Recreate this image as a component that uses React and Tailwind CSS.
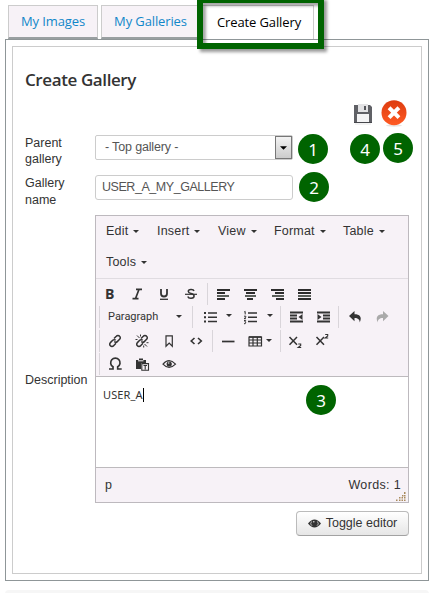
import React from "react";

const arial = "font-['Liberation_Sans',Arial,sans-serif]";

function Caret({ className = "" }) {
  return (
    <svg className={"shrink-0 " + className} width="6" height="3" viewBox="0 0 6 3">
      <path d="M0 0h6L3 3z" fill="#333" />
    </svg>
  );
}

function Icon({ children, className = "w-[27.2px]" }) {
  return (
    <span className={"flex shrink-0 items-center justify-center " + className}>
      <svg width="16" height="16" viewBox="0 0 16 16" fill="none" stroke="#333" strokeWidth="1.5">
        {children}
      </svg>
    </span>
  );
}

function Sep() {
  return <span className="h-[22px] w-px shrink-0 bg-[#d9d5da]" />;
}

function Lines({ rows }) {
  return rows.map(([x, w], i) => (
    <rect key={i} x={x} y={3 + i * 3} width={w} height="2" fill={i === 2 ? "#5a5f5a" : "#2d2d2d"} stroke="none" />
  ));
}

function Badge({ n, className }) {
  return (
    <span
      className={
        "absolute flex h-[30px] w-[30px] items-center justify-center rounded-full bg-[#006400] font-['Noto_Sans',sans-serif] text-[17px] leading-none text-white " +
        className
      }
    >
      {n}
    </span>
  );
}

function MenuItem({ label, className }) {
  return (
    <span className={"flex items-center gap-[5px] " + className}>
      {label}
      <Caret />
    </span>
  );
}

function ChainHalves() {
  return (
    <g strokeWidth="1.5">
      <path d="M7 5.5 9.3 3.2a2.1 2.1 0 0 1 3.3 0 2.1 2.1 0 0 1 0 3.1l-2.3 2.3a2.1 2.1 0 0 1-3 0" />
      <path d="M9 10.3l-2.400 2.400a2.100 2.100 0 0 1-3.200 0 2.100 2.100 0 0 1 0-3.100L5.700 7.300a2.100 2.100 0 0 1 3 0" />
    </g>
  );
}

function Toolbar() {
  return (
    <div className="h-[97px] pt-[3px]">
      <div className="flex h-[23px] items-center">
        <span className="w-[27px] shrink-0 pl-[9px] font-['Open_Sans',sans-serif] text-[14px] font-bold leading-[20px]">B</span>
        <Icon className="w-[27px]"><path d="M7 3.4h6M3.5 12.6h6M10 3.4 6.5 12.6" strokeWidth="1.6" /></Icon>
        <Icon className="w-[27px]"><path d="M5 3v4.5a3 3 0 0 0 6 0V3" strokeWidth="1.8" /><path d="M4 13.3h8" strokeWidth="1.3" /></Icon>
        <Icon className="w-[28px]"><path d="M11 5C10.500 3 5.300 3 5.300 5.500c0 2.500 5.800 1.600 5.800 4.500 0 2.800-5.600 3-6.300.5" /><path d="M2 8.300h12" strokeWidth="1.200" /></Icon>
        <span className="w-[2px]" />
        <Sep />
        <span className="w-px" />
        <Icon><Lines rows={[[2, 13], [2, 8], [2, 12], [2, 8]]} /></Icon>
        <Icon><Lines rows={[[2, 13], [4, 9], [3, 11], [5, 6]]} /></Icon>
        <Icon><Lines rows={[[2, 13], [6, 9], [3, 12], [7, 8]]} /></Icon>
        <Icon><Lines rows={[[2, 13], [2, 13], [2, 13], [2, 13]]} /></Icon>
      </div>
      <div className="flex h-[23px] items-center pl-[3px]">
        <Sep />
        <span className="ml-[8px] w-[68px] font-['Roboto',sans-serif] text-[11px] leading-[14px]">Paragraph</span>
        <Caret />
        <span className="w-[10px]" />
        <Sep />
        <Icon className="w-[33px]">
          <path d="M6 4h9M6 8.200h9M6 12.500h9" strokeWidth="1.600" />
          <path d="M2 4h2M2 8.200h2M2 12.500h2" strokeWidth="2" />
        </Icon>
        <Caret className="-mt-[2px]" />
        <Icon className="w-[35px]">
          <path d="M6 4h9M6 8.200h9M6 12.500h9" strokeWidth="1.600" />
          <path d="M2.200 3l1-.6v3M2 7.200h1.800v1L2 9.700h2M2 11.500h1.700L2.800 13l1 .5-.6 1.200H2" strokeWidth="1" />
        </Icon>
        <Caret className="-mt-[2px]" />
        <span className="w-[7px]" />
        <Sep />
        <span className="w-px" />
        <Icon className="w-[27px]"><path d="M2 3.500h13M2 6.500h7M2 9.500h7M2 12.500h13" strokeWidth="1.900" /><path d="M14.500 5v6l-4-3z" fill="#333" stroke="none" /></Icon>
        <Icon className="w-[27px]"><path d="M2 3.500h13M8 6.500h7M8 9.500h7M2 12.500h13" strokeWidth="1.900" /><path d="M2.500 5v6l4-3z" fill="#333" stroke="none" /></Icon>
        <span className="w-[2px]" />
        <Sep />
        <span className="w-[2px]" />
        <Icon><path d="M7.500 2v3.200c5 0 8 2.500 5.200 8.300.2-3-2.200-4.700-5.200-4.500v3.200L2 7z" fill="#333" stroke="none" /></Icon>
        <Icon><path d="M9 2v3.200c-5 0-8 2.500-5.200 8.300-.2-3 2.200-4.700 5.200-4.500v3.200L14.500 7z" fill="#aaa" stroke="none" /></Icon>
      </div>
      <div className="mt-px flex h-[24px] items-center pl-[3px]">
        <Sep />
        <span className="w-px" />
        <Icon><ChainHalves /></Icon>
        <Icon><ChainHalves /><path d="M3 2.500 5.500 5M10.500 11l2.500 2.500M6.500 1.500v2M1.500 6.500h2M9.700 12.500v2M12.500 9.700h2" strokeWidth="1" /></Icon>
        <Icon><path d="M5 2.800h6.300v10.400L8.200 10 5 13.200z" strokeWidth="1.200" /></Icon>
        <Icon><path d="M6.500 5 3.200 8l3.300 3M10 5l3.300 3L10 11" strokeWidth="1.600" /></Icon>
        <span className="w-[2px]" />
        <Sep />
        <span className="w-[2px]" />
        <Icon><path d="M2 8.500h12.500" strokeWidth="1.700" /></Icon>
        <Icon className="w-[26px]"><path d="M2 4h12.500v9H2zM2 7h12.500M2 10h12.500M6 4v9M10.300 4v9" strokeWidth="1.200" /><path d="M2 4h12.500" strokeWidth="1.600" /></Icon>
        <Caret className="-ml-[2px] -mt-[2px]" />
        <span className="w-[8px]" />
        <Sep />
        <span className="w-px" />
        <Icon className="w-[27px]"><path d="m2.500 4 7.500 7.800M10 4l-7.500 7.800" /><path d="M11.200 11h2.500v1.500l-2.500 2h3" strokeWidth="1.100" /></Icon>
        <Icon className="w-[27px]"><path d="m2.500 4 7.500 7.800M10 4l-7.500 7.800" /><path d="M11.200 1.500h2.500V3l-2.500 2h3" strokeWidth="1.100" /></Icon>
      </div>
      <div className="flex h-[22px] items-center pl-[3px]">
        <Sep />
        <span className="w-px" />
        <Icon><path d="M2 13h4v-2.200a4.700 4.700 0 1 1 4.700 0V13h4" strokeWidth="1.700" /></Icon>
        <Icon>
          <path d="M2 4h3V2.500h4V4h3v3H7v6H2z" fill="#333" stroke="none" /><path d="M4 4.800h5.500" stroke="#f7f2f7" strokeWidth="1" />
          <path d="M7.800 7.600h6.700v6.700H7.800zM9.500 9.500H13M11.200 9.500v4" strokeWidth="1.100" />
        </Icon>
        <Icon><path d="M2 8.200q6-7 12.500 0-6.500 6.500-12.500 0z" strokeWidth="1.200" /><circle cx="8.200" cy="8" r="2.600" fill="#333" stroke="none" /><circle cx="7.700" cy="7" r=".8" fill="#ddd" stroke="none" /></Icon>
      </div>
    </div>
  );
}

function Editor() {
  return (
    <div className="relative flex h-[288px] w-[314px] flex-col border border-[#bdb9be] bg-[#f7f2f7]">
      <div className="h-[63px] border-b border-[#e0dce1] pl-[10px] text-[12.5px] tracking-[0.2px]">
        <div className="flex h-[31px] items-center">
          <MenuItem label="Edit" className="w-[51px]" />
          <MenuItem label="Insert" className="w-[61px]" />
          <MenuItem label="View" className="w-[56px]" />
          <MenuItem label="Format" className="w-[69px]" />
          <MenuItem label="Table" className="w-[50px]" />
        </div>
        <div className="flex h-[31px] items-center">
          <MenuItem label="Tools" className="w-[51px]" />
        </div>
      </div>
      <Toolbar />
      <div className="relative flex h-[92px] items-start border-y border-[#bdbabd] bg-white pl-[7px] pt-[10px] font-['Noto_Sans',sans-serif] text-[11px] leading-[16px]">
        <span className="tracking-[0.1px]">USER_A</span>
        <span className="mt-[1px] h-[14px] w-px bg-black" />
        <Badge n="3" className="left-[210px] top-[8px]" />
      </div>
      <div className="relative flex flex-1 items-center justify-between pl-[9px] pr-[7px] text-[12.5px]">
        <span>p</span>
        <span className="tracking-[0.35px]">Words: 1</span>
        <svg className="absolute bottom-px right-[2px]" width="10" height="9" viewBox="0 0 10 9" fill="#a98a5c">
          <path d="M8 0h1.500v2H8zM6 3h1.500v1.500H6zM8 3h1.500v1.500H8zM3 5h1.500v1.500H3zM5.500 5H7v1.500H5.500zM8 5h1.500v1.500H8zM0 7.500h1.500V9H0zM3 7.500h1.500V9H3zM5.500 7.500H7V9H5.500zM8 7.500h1.500V9H8z" />
        </svg>
      </div>
    </div>
  );
}

function SaveIcon() {
  return (
    <svg width="20" height="21" viewBox="0 0 20 21">
      <path d="M1 1h16l2 2v15H1z" fill="#606166" />
      <path d="M5 0h10v8H5z" fill="#e3e3e5" />
      <path d="M11 2h2v4h-2z" fill="#55565b" />
      <path d="M4 10h12v8H4z" fill="#f4f4f5" />
      <path d="M1 18h18v1H1z" fill="#46474c" />
      <path d="M2 20h16" stroke="#e5e5e5" />
    </svg>
  );
}

function CloseIcon() {
  return (
    <svg width="26" height="27" viewBox="0 0 26 27">
      <defs>
        <linearGradient id="close-red" x1="0" y1="0" x2="0" y2="1">
          <stop offset="0" stopColor="#dd3c10" />
          <stop offset="1" stopColor="#ff5a23" />
        </linearGradient>
      </defs>
      <ellipse cx="13" cy="25.500" rx="8" ry="1.200" fill="#e8e4e2" />
      <circle cx="13" cy="12.700" r="12.500" fill="url(#close-red)" />
      <path d="m9.500 9.200 7 7M16.500 9.200l-7 7" stroke="#fff" strokeWidth="4" strokeLinecap="square" />
    </svg>
  );
}

export default function App() {
  return (
    <div className={"relative h-[593px] w-[440px] overflow-hidden bg-white text-[12.5px] text-[#333] " + arial}>
      <div className="flex h-[39px] items-end pl-[8px] font-['Open_Sans',sans-serif] text-[13px] tracking-[-0.12px]">
        <span className="flex h-[34px] w-[90px] items-center justify-center border border-b-2 border-[#ccc] border-b-[#999fa1] bg-[#f7f2f7] pt-px text-[#1187c9]">My Images</span>
        <span className="ml-[3px] flex h-[34px] w-[99px] items-center justify-center border border-b-2 border-[#ccc] border-b-[#999fa1] bg-[#f7f2f7] pt-px text-[#1187c9]">My Galleries</span>
        <span className="ml-[2px] h-[34px] w-[112px] border border-b-0 border-[#ccc] pl-[14px] pt-[7px] leading-[19px] text-black">Create Gallery</span>
      </div>
      <div className="ml-[5px] h-[542px] w-[424px] border border-[#8f9698] p-[6px]">
        <div className="h-[528px] w-[410px] border border-[#ccc] pl-[12px] pt-[21px]">
          <h1 className="h-[32px] font-['Open_Sans',sans-serif] text-[17px] font-semibold leading-[24px] tracking-[-0.4px]">Create Gallery</h1>
          <div className="flex h-[35px] items-start pl-[328px]">
            <span className="mt-[4px]"><SaveIcon /></span>
            <span className="ml-[8px]"><CloseIcon /></span>
          </div>
          <div className="flex h-[40px]">
            <span className="w-[70px] whitespace-pre-line leading-[16px]">{"Parent\ngallery"}</span>
            <span className="flex h-[25px] w-[198px] items-center justify-between rounded-[2px] border border-[#ccc] pl-[9px] text-[#555]">
              <span className="tracking-[-0.15px]">- Top gallery -</span>
              <span className="flex h-[23px] w-[17px] items-center justify-center border border-[#777] bg-gradient-to-b from-[#f3f3f3] to-[#ccc]">
                <svg width="7" height="4" viewBox="0 0 8 4"><path d="M0 0h8L4 4z" /></svg>
              </span>
            </span>
          </div>
          <div className="flex h-[40px]">
            <span className="w-[70px] whitespace-pre-line leading-[17px]">{"Gallery\nname"}</span>
            <span className="flex h-[25px] w-[198px] items-center rounded-[3px] border border-[#ccc] pl-[6px] tracking-[-0.45px] text-[#555]">USER_A_MY_GALLERY</span>
          </div>
          <div className="flex">
            <span className="w-[70px] pt-[157px] leading-[17px]">Description</span>
            <Editor />
          </div>
          <div className="mt-[8px] flex w-[384px] justify-end">
            <span className="flex h-[25px] w-[113px] items-center justify-center gap-[5px] rounded-[4px] border border-[#bbb] border-b-[#a2a2a2] bg-gradient-to-b from-white to-[#e6e6e6] pb-px">
              <svg width="13" height="9" viewBox="0 0 13 9"><path d="M0 4.500q6.500-8 13 0-6.500 8-13 0z" fill="#333" /><path d="M3.600 2.500q-2.200 2.800.4 4.200M9.400 2.500q2.200 2.800-.4 4.200" fill="none" stroke="#eee" strokeWidth=".7" /><circle cx="5.800" cy="2.700" r=".8" fill="#ddd" /></svg>
              Toggle editor
            </span>
          </div>
        </div>
      </div>
      <div className="ml-[5px] mt-[9px] h-[10px] w-[424px] rounded-t-[4px] bg-[#f6f6f6]" />

      <div className="absolute left-[197px] top-[-3px] h-[52px] w-[127px] border-[6px] border-[#006400] shadow-[3px_3px_3px_rgba(0,0,0,0.4),inset_3px_3px_3px_rgba(0,0,0,0.35)]" />
      <Badge n="1" className="left-[298px] top-[134px]" />
      <Badge n="2" className="left-[299px] top-[172px]" />
      <Badge n="4" className="left-[350px] top-[134px]" />
      <Badge n="5" className="left-[383px] top-[133px]" />
    </div>
  );
}
